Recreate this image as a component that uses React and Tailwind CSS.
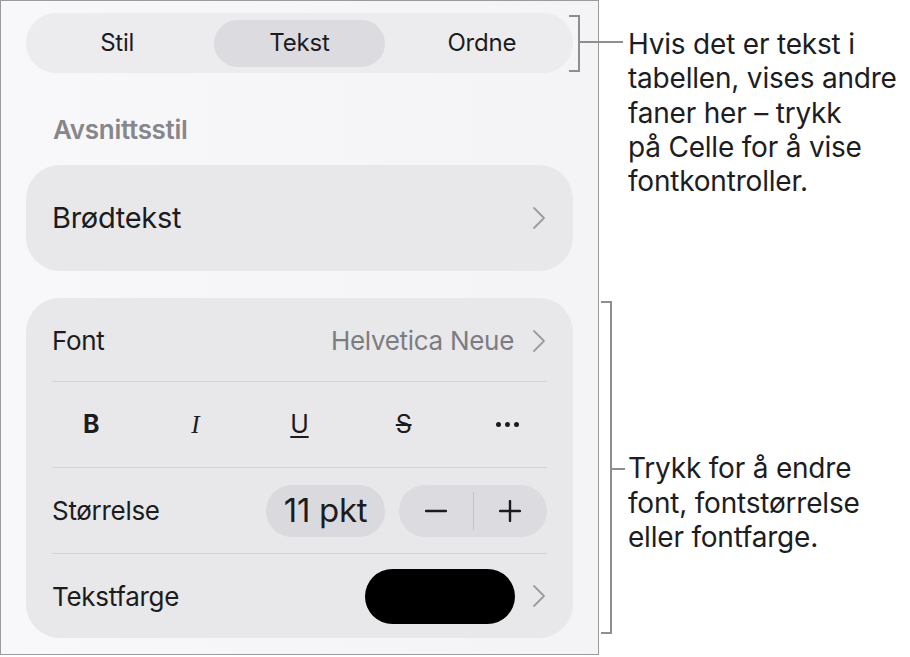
import React from "react";

const font = { fontFamily: "Inter, 'Noto Sans', sans-serif" };

function Chevron() {
  return (
    <svg width="14" height="24" viewBox="0 0 14 24" className="shrink-0">
      <polyline points="2,2 12,12 2,22" fill="none" stroke="#9d9da1" strokeWidth="1.8" strokeLinecap="round" strokeLinejoin="round" />
    </svg>
  );
}

function Divider() {
  return <div className="mx-[26px] h-px bg-[#d3d3d6]" />;
}

export default function App() {
  return (
    <div className="relative flex h-[657px] w-[910px] bg-white text-[#1c1c1e]" style={font}>
      {/* inspector panel */}
      <div className="flex h-[655px] w-[599px] flex-col border border-[#9b9b9b] bg-gradient-to-r from-[#f8f8fa] to-[#f4f4f7] px-[25px] pt-[12px]">
        {/* tab switcher */}
        <div className="grid h-[60px] grid-cols-3 items-center rounded-full bg-[#ececef] text-[24px] tracking-[-0.2px]">
          <div className="flex h-[47px] items-center justify-center">Stil</div>
          <div className="mx-[6px] flex h-[47px] items-center justify-center rounded-full bg-[#dcdce0]">Tekst</div>
          <div className="flex h-[47px] items-center justify-center">Ordne</div>
        </div>

        <div className="pl-[27px] pt-[41px] text-[26px] font-semibold leading-[32px] tracking-[-0.3px] text-[#86868b]">Avsnittsstil</div>

        <div className="mt-[19px] flex h-[106px] items-center justify-between rounded-[34px] bg-[#e8e8eb] pl-[26px] pr-[27px]">
          <span className="text-[29px] tracking-[-0.3px]">Brødtekst</span>
          <Chevron />
        </div>

        <div className="mt-[27px] flex flex-col rounded-[34px] bg-[#e8e8eb] tracking-[-0.3px]">
          {/* font family */}
          <div className="flex h-[83px] items-center justify-between pl-[26px] pr-[27px] pt-[2px] text-[26px]">
            <span>Font</span>
            <div className="flex items-center gap-[18px]">
              <span className="text-[#7c7c81]">Helvetica Neue</span>
              <Chevron />
            </div>
          </div>
          <Divider />
          {/* style buttons */}
          <div className="grid h-[85px] grid-cols-5 items-center px-[13px] text-[25px]">
            <span className="text-center font-bold">B</span>
            <span className="text-center italic" style={{ fontFamily: "'Liberation Serif', serif" }}>I</span>
            <span className="text-center underline decoration-[1.5px] underline-offset-[3px]">U</span>
            <span className="text-center line-through decoration-[1.5px]">S</span>
            <span className="flex justify-center gap-[4px]">
              <span className="h-[5px] w-[5px] rounded-full bg-[#1c1c1e]" />
              <span className="h-[5px] w-[5px] rounded-full bg-[#1c1c1e]" />
              <span className="h-[5px] w-[5px] rounded-full bg-[#1c1c1e]" />
            </span>
          </div>
          <Divider />
          {/* size */}
          <div className="flex h-[85px] items-center justify-between pl-[26px] pr-[26px]">
            <span className="text-[26px]">Størrelse</span>
            <div className="flex items-center gap-[14px]">
              <div className="flex h-[52px] w-[119px] items-center justify-center rounded-full bg-[#dadade] text-[33px] tracking-[-0.3px]">11 pkt</div>
              <div className="flex h-[52px] w-[148px] items-center rounded-full bg-[#dcdce0]">
                <div className="flex flex-1 items-center justify-center">
                  <svg width="22" height="22" viewBox="0 0 22 22"><line x1="1" y1="11" x2="21" y2="11" stroke="#1c1c1e" strokeWidth="2.4" strokeLinecap="round" /></svg>
                </div>
                <div className="h-[38px] w-px bg-[#c4c4c8]" />
                <div className="flex flex-1 items-center justify-center">
                  <svg width="22" height="22" viewBox="0 0 22 22"><line x1="1" y1="11" x2="21" y2="11" stroke="#1c1c1e" strokeWidth="2.4" strokeLinecap="round" /><line x1="11" y1="1" x2="11" y2="21" stroke="#1c1c1e" strokeWidth="2.4" strokeLinecap="round" /></svg>
                </div>
              </div>
            </div>
          </div>
          <Divider />
          {/* text colour */}
          <div className="flex h-[84px] items-center justify-between pl-[26px] pr-[27px]">
            <span className="text-[26px]">Tekstfarge</span>
            <div className="flex items-center gap-[17px]">
              <div className="h-[55px] w-[150px] rounded-full bg-black" />
              <Chevron />
            </div>
          </div>
        </div>
      </div>

      {/* callouts */}
      <div className="flex flex-col pl-[29px] pt-[27px] text-[28px] leading-[34.3px] tracking-[-0.2px] text-[#1d1d1f]">
        <p>
          Hvis det er tekst i<br />
          tabellen, vises andre<br />
          faner her – trykk<br />
          på Celle for å vise<br />
          fontkontroller.
        </p>
        <p className="mt-[253px]">
          Trykk for å endre<br />
          font, fontstørrelse<br />
          eller fontfarge.
        </p>
      </div>

      {/* bracket: tabs */}
      <div className="absolute left-[569px] top-[15px] h-[57px] w-[11px] border-y-2 border-r-2 border-[#8e8e8e]" />
      <div className="absolute left-[580px] top-[41px] h-[2px] w-[43px] bg-[#8e8e8e]" />
      {/* bracket: font controls */}
      <div className="absolute left-[601px] top-[301px] h-[333px] w-[11px] border-y-2 border-r-2 border-[#8e8e8e]" />
      <div className="absolute left-[612px] top-[468px] h-[2px] w-[13px] bg-[#8e8e8e]" />
    </div>
  );
}
